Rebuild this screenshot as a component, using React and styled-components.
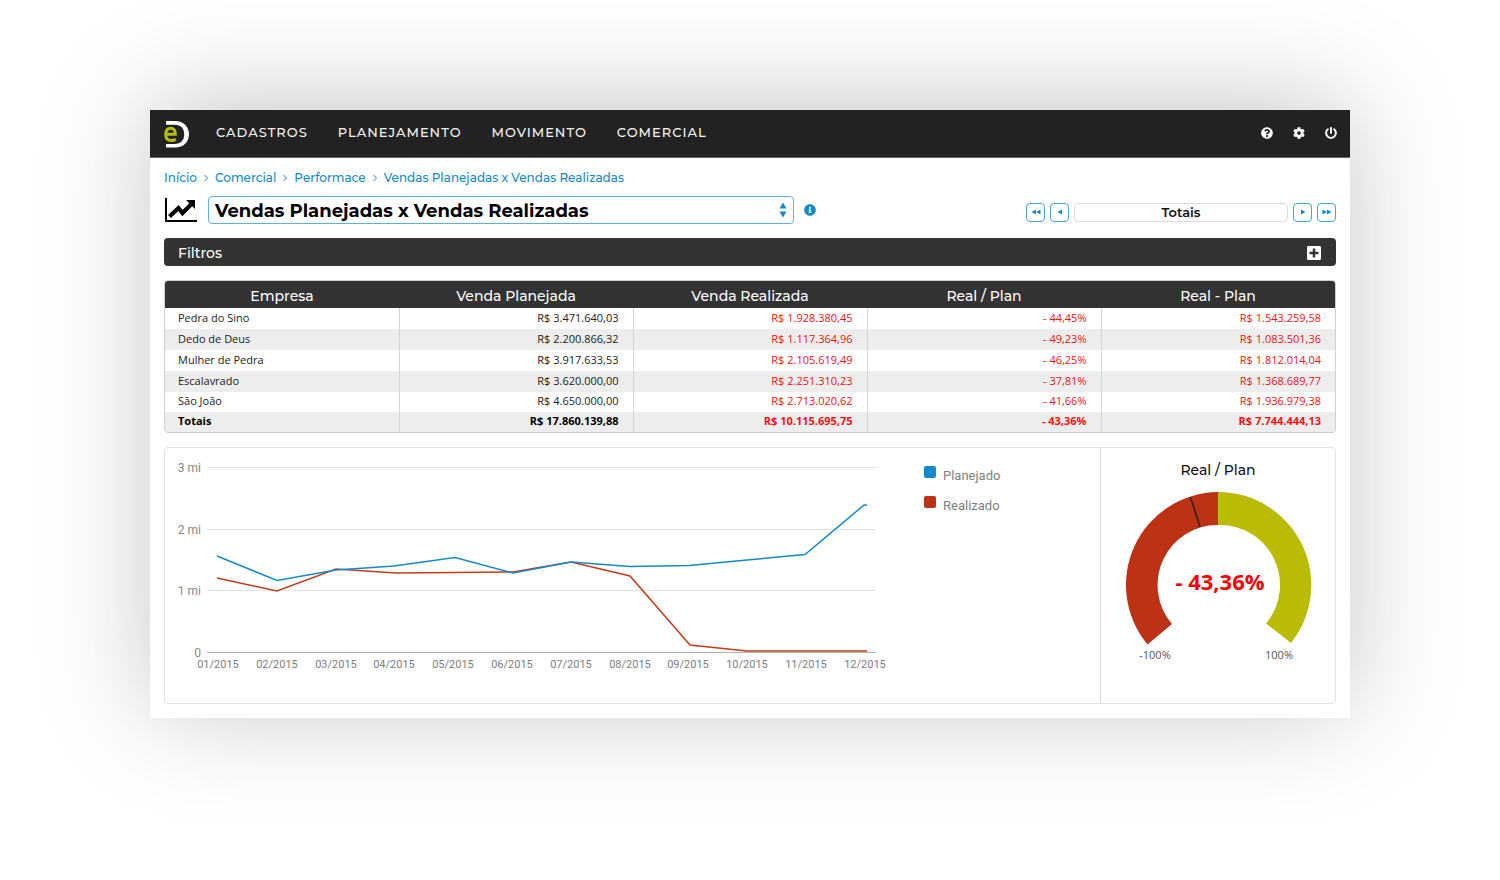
import React from "react";
import styled, { createGlobalStyle, css } from "styled-components";
import { FaQuestionCircle, FaCog, FaPowerOff, FaInfoCircle, FaPlusSquare } from "react-icons/fa";

const blue = "#1589cc";
const dark = "#333333";
const border = "#e2e2e2";
const brick = "#bd3214";
const olive = "#b9bb04";
const heading = `Montserrat, Inter, "Open Sans", sans-serif`;

const GlobalStyle = createGlobalStyle`
  *, *::before, *::after { box-sizing: border-box; }
  body {
    margin: 0;
    background: #fff;
    color: #222;
    font-family: "Open Sans", sans-serif;
    font-size: 11px;
  }
  button, input, select { font: inherit; color: inherit; margin: 0; }
`;

const Page = styled.div`
  min-height: 100vh;
  padding: 110px 10% 160px;
  overflow: hidden;
`;

const Window = styled.div`
  background: #fff;
  box-shadow: 0 -8px 100px rgba(35, 35, 35, 0.26);
`;

const TopBar = styled.header`
  display: flex;
  align-items: center;
  height: 48px;
  padding: 0 13px 0 14px;
  background: #222;
  border-bottom: 1px solid #666;
`;

const Menu = styled.nav`
  display: flex;
  flex: 1;
  gap: 30px;
  margin-left: 26px;
  padding-bottom: 3px;
`;

const MenuLink = styled.a`
  color: #f4f4f4;
  font: 500 13px/18px ${heading};
  letter-spacing: 1px;
  text-decoration: none;
`;

const Tools = styled.div`
  display: flex;
  gap: 20px;
  padding-bottom: 2px;
`;

const PlainButton = styled.button`
  display: flex;
  align-items: center;
  justify-content: center;
  padding: 0;
  border: 0;
  background: none;
  color: ${(p) => p.$color || "#fff"};
  cursor: pointer;
`;

const Content = styled.main`
  display: flex;
  flex-direction: column;
  gap: 14px;
  padding: 12px 14px 14px;
`;

const Heading = styled.div`
  display: flex;
  flex-direction: column;
  gap: 10px;
`;

const Crumbs = styled.nav`
  display: flex;
  align-items: center;
  gap: 6px;
  color: ${blue};
  font: 500 12px/16px ${heading};
`;

const Crumb = styled.a`
  color: inherit;
  text-decoration: none;
`;

const TitleRow = styled.div`
  display: flex;
  align-items: center;
  gap: 10px;
`;

const SelectWrap = styled.div`
  position: relative;
  flex: 0 1 586px;
  svg {
    position: absolute;
    right: 6px;
    top: 6px;
    pointer-events: none;
  }
`;

const ReportSelect = styled.select`
  display: block;
  width: 100%;
  height: 28px;
  padding: 2px 24px 0 6px;
  appearance: none;
  border: 1px solid #5db0e0;
  border-radius: 4px;
  background: #fff;
  color: #000;
  font: 700 18px/24px ${heading};
`;

const Pager = styled.div`
  display: flex;
  align-items: center;
  gap: 5px;
  margin-left: auto;
  padding-top: 4px;
`;

const PagerButton = styled.button`
  display: flex;
  align-items: center;
  justify-content: center;
  width: 19px;
  height: 19px;
  padding: 0;
  border: 1px solid #45a5dc;
  border-radius: 4px;
  background: #fff;
  color: ${blue};
`;

const PagerInput = styled.input`
  width: 214px;
  height: 19px;
  padding: 0;
  border: 1px solid #dcdcdc;
  border-radius: 4px;
  color: #111;
  font: 600 13px/17px ${heading};
  text-align: center;
`;

const FilterBar = styled.section`
  display: flex;
  align-items: center;
  justify-content: space-between;
  height: 28px;
  padding: 2px 14px 0;
  border-radius: 4px;
  background: ${dark};
`;

const FilterTitle = styled.h2`
  margin: 0;
  color: #fff;
  font: 500 14px/20px ${heading};
`;

const Card = styled.section`
  border: 1px solid ${(p) => p.$line || border};
  border-radius: 4px;
  overflow: hidden;
`;

const Table = styled.table`
  width: 100%;
  table-layout: fixed;
  border-collapse: collapse;
`;

const HeadCell = styled.th`
  height: 27px;
  padding: 2px 0 0;
  background: ${dark};
  color: #fff;
  font: 500 14px/20px ${heading};
`;

const Row = styled.tr`
  height: 21px;
  &:nth-child(even) { background: #ededed; }
  &:nth-child(5) { height: 20px; }
  ${(p) => p.$total && css`
    color: #000;
    font-weight: 700;
    height: 20px;
  `}
`;

const Cell = styled.td`
  padding: 0 14px 2px 13px;
  text-align: ${(p) => (p.$label ? "left" : "right")};
  line-height: 18px;
  color: ${(p) => (p.$negative ? "#ff1010" : "inherit")};
  & + & { border-left: 1px solid #d4d4d4; }
`;

const Charts = styled(Card)`
  display: grid;
  grid-template-columns: 4fr 1fr;
`;

const LinePanel = styled.div`
  display: flex;
  padding: 12px 0 19px;
  border-right: 1px solid #dadada;
`;

const Plot = styled.svg`
  display: block;
  flex: 0 1 724px;
  min-width: 0;
  height: auto;
  font: 12px Roboto, sans-serif;
`;

const Legend = styled.ul`
  display: flex;
  flex-direction: column;
  gap: 10px;
  margin: 6px 0 0 35px;
  padding: 0;
  list-style: none;
  color: #808080;
  font: 13px/20px Roboto, sans-serif;
`;

const LegendItem = styled.li`
  display: flex;
  gap: 7px;
`;

const Swatch = styled.span`
  width: 12px;
  height: 12px;
  border-radius: 2px;
  background: ${(p) => p.$color};
`;

const GaugePanel = styled.div`
  display: flex;
  flex-direction: column;
  align-items: center;
  padding-top: 12px;
`;

const GaugeTitle = styled.h3`
  margin: 0;
  color: #111;
  font: 500 14px/20px ${heading};
`;

const Gauge = styled.svg`
  display: block;
  width: 232px;
  max-width: 100%;
  font-family: "Open Sans", sans-serif;
`;

const columns = ["Empresa", "Venda Planejada", "Venda Realizada", "Real / Plan", "Real - Plan"];

const rows = [
  ["Pedra do Sino", "R$ 3.471.640,03", "R$ 1.928.380,45", "- 44,45%", "R$ 1.543.259,58"],
  ["Dedo de Deus", "R$ 2.200.866,32", "R$ 1.117.364,96", "- 49,23%", "R$ 1.083.501,36"],
  ["Mulher de Pedra", "R$ 3.917.633,53", "R$ 2.105.619,49", "- 46,25%", "R$ 1.812.014,04"],
  ["Escalavrado", "R$ 3.620.000,00", "R$ 2.251.310,23", "- 37,81%", "R$ 1.368.689,77"],
  ["São João", "R$ 4.650.000,00", "R$ 2.713.020,62", "- 41,66%", "R$ 1.936.979,38"],
  ["Totais", "R$ 17.860.139,88", "R$ 10.115.695,75", "- 43,36%", "R$ 7.744.444,13"],
];

const months = Array.from({ length: 12 }, (_, i) => `${String(i + 1).padStart(2, "0")}/2015`);
const ticks = [["3 mi", 8], ["2 mi", 70], ["1 mi", 131], ["0", 193]];

const Logo = () => (
  <svg width="26" height="28" viewBox="0 0 26 28" role="img" aria-label="eD">
    <path d="M2 1H11C19.500 1 25 6.500 25 14.300S19.500 27.600 11 27.600H2V24H10.500C17 24 20.200 20 20.200 14.300S17 4.800 10.500 4.800H2Z" fill="#fff" />
    <path
      d="M2 14.200H11.300C11.500 10.500 9.800 8.300 6.900 8.300C3.600 8.300 1.700 10.700 1.700 14.500C1.700 18.300 3.700 20.500 7.200 20.500C8.900 20.500 10.400 20.100 11.800 19.400"
      fill="none" stroke="#b7bd00" strokeWidth="3"
    />
  </svg>
);

const ChartIcon = () => (
  <svg width="34" height="26" viewBox="0 0 34 26" aria-hidden="true">
    <path d="M2 1V24H33" fill="none" stroke="#000" strokeWidth="2" />
    <path d="M5.500 19.500 14.500 11 18.500 16 27.500 7" fill="none" stroke="#000" strokeWidth="4.200" />
    <path d="M22 3H31V12Z" fill="#000" />
  </svg>
);

const Chevron = () => (
  <svg width="6" height="8" viewBox="0 0 6 8" aria-hidden="true">
    <path d="M1.500 1 4.500 4 1.500 7" fill="none" stroke="currentColor" />
  </svg>
);

const Arrow = ({ double, flip }) => (
  <svg width="10" height="6" viewBox="0 0 10 6" transform={flip ? "scale(-1 1)" : undefined} aria-hidden="true">
    <path d={double ? "M.5 .5 5 3 .5 5.500ZM5 .5 9.500 3 5 5.500Z" : "M3 .5 7.500 3 3 5.500Z"} fill="currentColor" />
  </svg>
);

export default function App() {
  return (
    <>
      <GlobalStyle />
      <Page>
        <Window>
          <TopBar>
            <Logo />
            <Menu>
              {["CADASTROS", "PLANEJAMENTO", "MOVIMENTO", "COMERCIAL"].map((m) => (
                <MenuLink href="#" key={m}>{m}</MenuLink>
              ))}
            </Menu>
            <Tools>
              <PlainButton aria-label="Ajuda"><FaQuestionCircle size={12} /></PlainButton>
              <PlainButton aria-label="Configurações"><FaCog size={12} /></PlainButton>
              <PlainButton aria-label="Sair"><FaPowerOff size={12} /></PlainButton>
            </Tools>
          </TopBar>
          <Content>
            <Heading>
              <Crumbs>
                <Crumb href="#">Início</Crumb>
                <Chevron />
                <Crumb href="#">Comercial</Crumb>
                <Chevron />
                <Crumb href="#">Performace</Crumb>
                <Chevron />
                <Crumb href="#">Vendas Planejadas x Vendas Realizadas</Crumb>
              </Crumbs>
              <TitleRow>
                <ChartIcon />
                <SelectWrap>
                  <ReportSelect aria-label="Relatório">
                    <option>Vendas Planejadas x Vendas Realizadas</option>
                  </ReportSelect>
                  <svg width="10" height="16" viewBox="0 0 10 16" aria-hidden="true">
                    <path d="M5 .5 8.500 6.500H1.500ZM5 15.500 1.500 9.500H8.500Z" fill={blue} />
                  </svg>
                </SelectWrap>
                <PlainButton $color={blue} aria-label="Informações"><FaInfoCircle size={12} /></PlainButton>
                <Pager>
                  <PagerButton aria-label="Primeiro"><Arrow double flip /></PagerButton>
                  <PagerButton aria-label="Anterior"><Arrow flip /></PagerButton>
                  <PagerInput aria-label="Página" defaultValue="Totais" />
                  <PagerButton aria-label="Próximo"><Arrow /></PagerButton>
                  <PagerButton aria-label="Último"><Arrow double /></PagerButton>
                </Pager>
              </TitleRow>
            </Heading>

            <FilterBar>
              <FilterTitle>Filtros</FilterTitle>
              <PlainButton aria-label="Expandir filtros"><FaPlusSquare size={16} /></PlainButton>
            </FilterBar>

            <Card $line="#cfcfcf">
              <Table>
                <thead>
                  <tr>{columns.map((c) => <HeadCell key={c} scope="col">{c}</HeadCell>)}</tr>
                </thead>
                <tbody>
                  {rows.map((r) => (
                    <Row key={r[0]} $total={r[0] === "Totais"}>
                      {r.map((v, i) => (
                        <Cell key={i} $label={i === 0} $negative={i > 1}>{v}</Cell>
                      ))}
                    </Row>
                  ))}
                </tbody>
              </Table>
            </Card>

            <Charts>
              <LinePanel>
                <Plot width="724" height="224" viewBox="0 0 724 224" role="img" aria-label="Vendas por mês">
                  {ticks.map(([label, y]) => (
                    <g key={label}>
                      <path d={`M42 ${y - 0.5}H711`} stroke={label === "0" ? "#b0b0b0" : "#e2e2e2"} />
                      <text x="36" y={y + 4} textAnchor="end" fill="#888">{label}</text>
                    </g>
                  ))}
                  {months.map((m, i) => (
                    <text key={m} x={53 + Math.round(i * 58.8)} y="208" textAnchor="middle" fontSize="11" fill="#808080">{m}</text>
                  ))}
                  <path d="M52 118 112 131 171 109 231 113 348 112 406 102 465 116 525 185 582 191H702" fill="none" stroke="#c43c1a" strokeWidth="1.500" />
                  <path d="M52 96 112 120.500 171 110 229 106 290 97.500 348 113 406 102 465 106.500 524 105.500 582 100 640 94.500 699 45H702" fill="none" stroke={blue} strokeWidth="1.500" />
                </Plot>
                <Legend>
                  <LegendItem><Swatch $color={blue} />Planejado</LegendItem>
                  <LegendItem><Swatch $color={brick} />Realizado</LegendItem>
                </Legend>
              </LinePanel>
              <GaugePanel>
                <GaugeTitle>Real / Plan</GaugeTitle>
                <Gauge viewBox="0 0 232 190" role="img" aria-label="Real / Plan: - 43,36%">
                  <path d="M45.500 164.500A93 93 0 0 1 116 12V45A60 60 0 0 0 70 144Z" fill={brick} />
                  <path d="M116 12A93 93 0 0 1 189 163L164 143.500A60 60 0 0 0 116 45Z" fill={olive} />
                  <path d="M88.500 17 98 47" stroke="#222" strokeWidth="1.500" />
                  <text x="118" y="110" textAnchor="middle" fill="#ff0000" fontSize="22" fontWeight="700">- 43,36%</text>
                  <text x="53" y="179" textAnchor="middle" fill="#555" fontSize="11">-100%</text>
                  <text x="177" y="179" textAnchor="middle" fill="#555" fontSize="11">100%</text>
                </Gauge>
              </GaugePanel>
            </Charts>
          </Content>
        </Window>
      </Page>
    </>
  );
}
